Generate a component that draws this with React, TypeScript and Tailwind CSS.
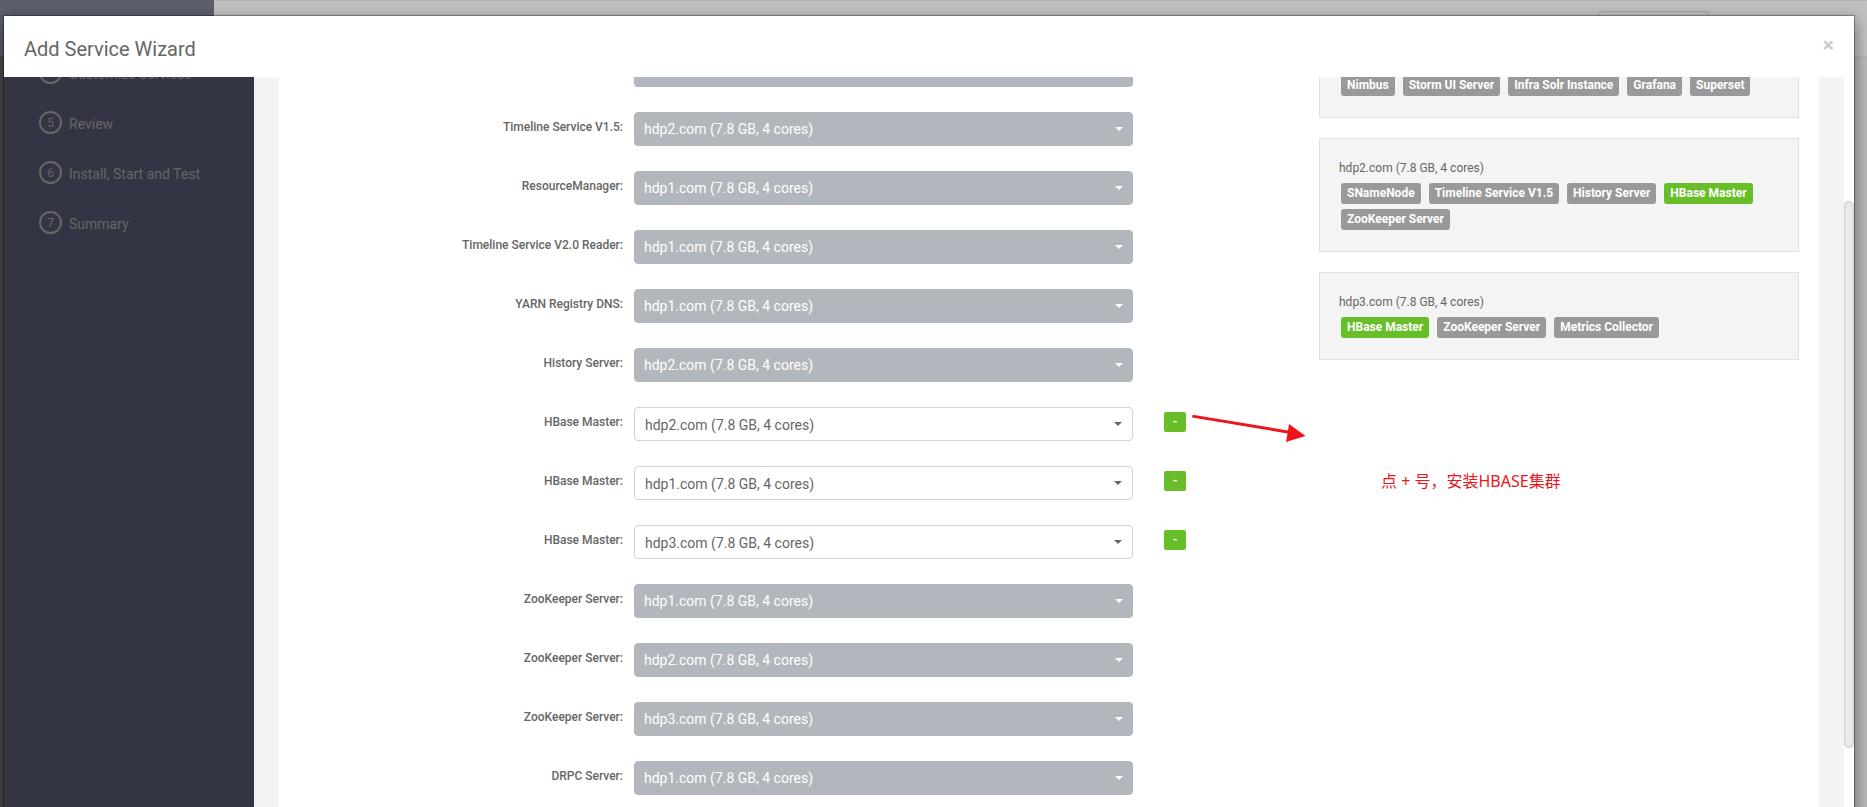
interface Assignment {
  component: string;
  host: string;
  editable?: boolean;
}

interface HostCardProps {
  name?: string;
  components: string[];
}

const FIRST_STEP = 4;
const steps = ["Customize Services", "Review", "Install, Start and Test", "Summary"];

const hosts = ["hdp1.com", "hdp2.com", "hdp3.com"];

const assignments: Assignment[] = [
  { component: "Timeline Service V1.5", host: "hdp2.com" },
  { component: "ResourceManager", host: "hdp1.com" },
  { component: "Timeline Service V2.0 Reader", host: "hdp1.com" },
  { component: "YARN Registry DNS", host: "hdp1.com" },
  { component: "History Server", host: "hdp2.com" },
  { component: "HBase Master", host: "hdp2.com", editable: true },
  { component: "HBase Master", host: "hdp1.com", editable: true },
  { component: "HBase Master", host: "hdp3.com", editable: true },
  { component: "ZooKeeper Server", host: "hdp1.com" },
  { component: "ZooKeeper Server", host: "hdp2.com" },
  { component: "ZooKeeper Server", host: "hdp3.com" },
  { component: "DRPC Server", host: "hdp1.com" },
];

const hostCards: HostCardProps[] = [
  { components: ["Nimbus", "Storm UI Server", "Infra Solr Instance", "Grafana", "Superset"] },
  { name: "hdp2.com", components: ["SNameNode", "Timeline Service V1.5", "History Server", "HBase Master", "ZooKeeper Server"] },
  { name: "hdp3.com", components: ["HBase Master", "ZooKeeper Server", "Metrics Collector"] },
];

const firstEditable = assignments.findIndex((a) => a.editable);

function Backdrop() {
  return (
    <div className="absolute inset-0 flex bg-[#c0c0c0]">
      <div className="w-[214px] bg-[#4a4a4a]">
        <div className="h-14 bg-[#5a606c]" />
      </div>
      <div className="flex-1">
        <div className="flex h-14 justify-end border-t border-[#b0b0b0] pr-[158px] pt-[10px]">
          <div className="h-8 w-[110px] rounded-sm border border-[#a4a4a4]" />
        </div>
        <div className="h-full border-t border-[#b0b0b0] bg-[#b8b8b8]" />
      </div>
    </div>
  );
}

function Sidebar() {
  return (
    <nav className="w-[250px] shrink-0 bg-[#333544] pl-[35px]">
      <ol start={FIRST_STEP} className="-mt-4">
        {steps.map((step, i) => (
          <li key={step} className="flex h-[50px] items-start gap-[7px] text-sm text-[#666]">
            <span className="flex size-[23px] items-center justify-center rounded-full border-2 border-[#666] text-xs">{FIRST_STEP + i}</span>
            <span className="pt-[3px]">{step}</span>
          </li>
        ))}
      </ol>
    </nav>
  );
}

function Annotation() {
  return (
    <div className="pointer-events-none absolute left-[59px] top-0 text-[#ee141b]">
      <svg width="114" height="40" viewBox="0 0 114 40" fill="currentColor">
        <path d="M0.6 7.8 L96 23.4 L97 17 L113.5 29 L94 35 L95.5 26.4 L0.1 10.6 Z" />
      </svg>
      <p className="ml-[189px] mt-[22px] whitespace-nowrap font-['Noto_Sans','Noto_Sans_CJK_SC',sans-serif] text-base leading-6">点 + 号，安装HBASE集群</p>
    </div>
  );
}

function AssignmentRow({ row, index }: { row: Assignment; index: number }) {
  const id = `host-${index}`;
  return (
    <div className="grid h-[59px] grid-cols-[335fr_499fr_186fr]">
      <label htmlFor={id} className="pr-[11px] pt-[7px] text-right text-xs leading-[17px] font-medium text-[#666]">
        {row.component}:
      </label>
      <div className="relative h-[34px]">
        <select
          id={id}
          defaultValue={row.host}
          disabled={!row.editable}
          className={`block h-full w-full appearance-none rounded border text-sm opacity-100 ${
            row.editable ? "border-[#cfd3d7] bg-white px-[10px] pt-[2px] text-[#666]" : "border-[#b2b6bd] bg-[#b2b6bd] px-[9px] text-white"
          }`}
        >
          {hosts.map((host) => (
            <option key={host} value={host}>
              {host} (7.8 GB, 4 cores)
            </option>
          ))}
        </select>
        <svg
          className={`pointer-events-none absolute top-[15px] ${row.editable ? "right-[11px] text-[#666]" : "right-[10px] text-white"}`}
          width="8"
          height="4"
          viewBox="0 0 8 4"
          fill="currentColor"
        >
          <path d="M0 0H8L4 4Z" />
        </svg>
      </div>
      <div className="relative pl-[31px] pt-[5px]">
        {row.editable && (
          <button type="button" aria-label="Remove" className="flex h-5 w-[22px] items-center justify-center rounded-xs bg-[#68be28] text-xs font-bold text-white">
            -
          </button>
        )}
        {index === firstEditable && <Annotation />}
      </div>
    </div>
  );
}

function HostCard({ name, components }: HostCardProps) {
  return (
    <section className="border border-[#e1e1e2] bg-[#f4f4f4] px-[19px] pb-[21px] pt-5">
      {name && <h3 className="mb-[6px] text-xs leading-[18px] text-[#666]">{name} (7.8 GB, 4 cores)</h3>}
      <ul className="ml-[2px] flex flex-wrap gap-x-2 gap-y-[5px]">
        {components.map((component) => (
          <li
            key={component}
            className={`rounded-[3px] px-[6px] text-xs leading-[21px] font-bold text-white ${
              component === "HBase Master" ? "bg-[#68be28]" : "bg-[#999]"
            }`}
          >
            {component}
          </li>
        ))}
      </ul>
    </section>
  );
}

export default function App() {
  return (
    <div className="relative h-screen overflow-hidden font-[Roboto,'Noto_Sans_CJK_SC',sans-serif]">
      <Backdrop />
      <div className="relative ml-1 mr-[13px] mt-4 flex h-full flex-col bg-white shadow-[0_5px_15px_rgba(0,0,0,0.5),0_0_0_1px_rgba(0,0,0,0.3)]">
        <header className="flex h-[61px] shrink-0 items-center justify-between px-5">
          <h1 className="pt-1 text-xl text-[#666]">Add Service Wizard</h1>
          <button type="button" aria-label="Close" className="pb-[2px] text-[21px] leading-none font-bold text-[#ccc]">
            ×
          </button>
        </header>
        <div className="flex min-h-0 flex-1 overflow-hidden">
          <Sidebar />
          <main className="flex-1 bg-[#f3f3f3] px-[25px]">
            <div className="flex h-full bg-white px-5">
              <div className="w-[68%]">
                {/* bottom edge of the row scrolled under the header */}
                <div className="grid h-[35px] grid-cols-[335fr_499fr_186fr]">
                  <div className="col-start-2 h-[10px] rounded-b bg-[#b2b6bd]" />
                </div>
                {assignments.map((row, i) => (
                  <AssignmentRow key={i} row={row} index={i} />
                ))}
              </div>
              <div className="-mt-[23px] flex w-[32%] flex-col gap-5">
                {hostCards.map((card, i) => (
                  <HostCard key={i} {...card} />
                ))}
              </div>
            </div>
          </main>
          <div className="w-[10px] bg-white pt-[124px]">
            <div className="h-[547px] rounded-full bg-[#ebebeb] shadow-[inset_0_0_3px_rgba(0,0,0,0.25)]" />
          </div>
        </div>
      </div>
    </div>
  );
}
